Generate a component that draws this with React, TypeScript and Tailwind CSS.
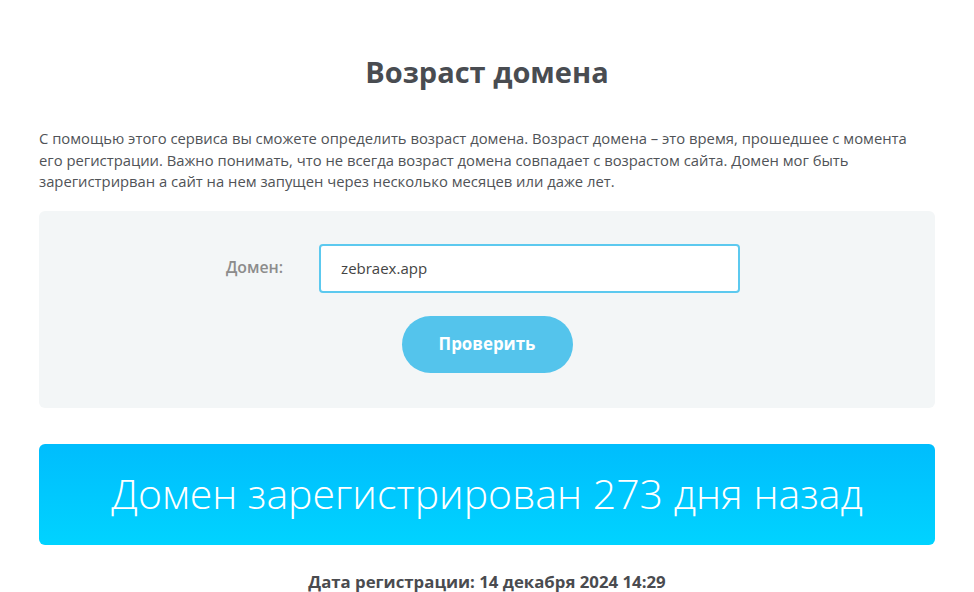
import React, { useState } from "react";

const font = { fontFamily: '"Open Sans", "Liberation Sans", sans-serif' };

export default function App() {
  const [domain, setDomain] = useState("zebraex.app");

  return (
    <div className="min-h-screen w-full bg-white" style={font}>
      <div className="mx-auto w-[896px] pt-[52px]">
        <h1 className="text-center text-[29px] font-bold leading-[40px] text-[#494c51]">
          Возраст домена
        </h1>

        <p className="mt-[36px] text-[14.8px] leading-[21.5px] text-[#505357]">
          С помощью этого сервиса вы сможете определить возраст домена. Возраст домена – это время, прошедшее с момента
          <br />
          его регистрации. Важно понимать, что не всегда возраст домена совпадает с возрастом сайта. Домен мог быть
          <br />
          зарегистрирван а сайт на нем запущен через несколько месяцев или даже лет.
        </p>

        <div className="mt-[18px] flex flex-col items-center rounded-md bg-[#f3f6f7] pt-[33px] pb-[35px]">
          <div className="flex items-center pr-[8px]">
            <label className="mr-[36px] text-[15.8px] font-semibold text-[#8c8c8c]">Домен:</label>
            <input
              value={domain}
              onChange={(e) => setDomain(e.target.value)}
              className="h-[49px] w-[421px] rounded-[4px] border-2 border-[#5cc9ef] bg-white px-[20px] text-[15px] text-[#444] outline-none"
            />
          </div>
          <button className="mt-[23px] h-[57px] w-[171px] rounded-full bg-[#54c4ec] text-[16.9px] font-bold text-white">
            Проверить
          </button>
        </div>

        <div className="mt-[36px] flex h-[101px] items-center justify-center rounded-md bg-gradient-to-b from-[#00bdfd] to-[#00d3ff]">
          <span className="text-[41px] font-light text-white">Домен зарегистрирован 273 дня назад</span>
        </div>

        <div className="mt-[24px] text-center text-[16.8px] font-bold text-[#4a4b4f]">
          Дата регистрации: 14 декабря 2024 14:29
        </div>
      </div>
    </div>
  );
}
